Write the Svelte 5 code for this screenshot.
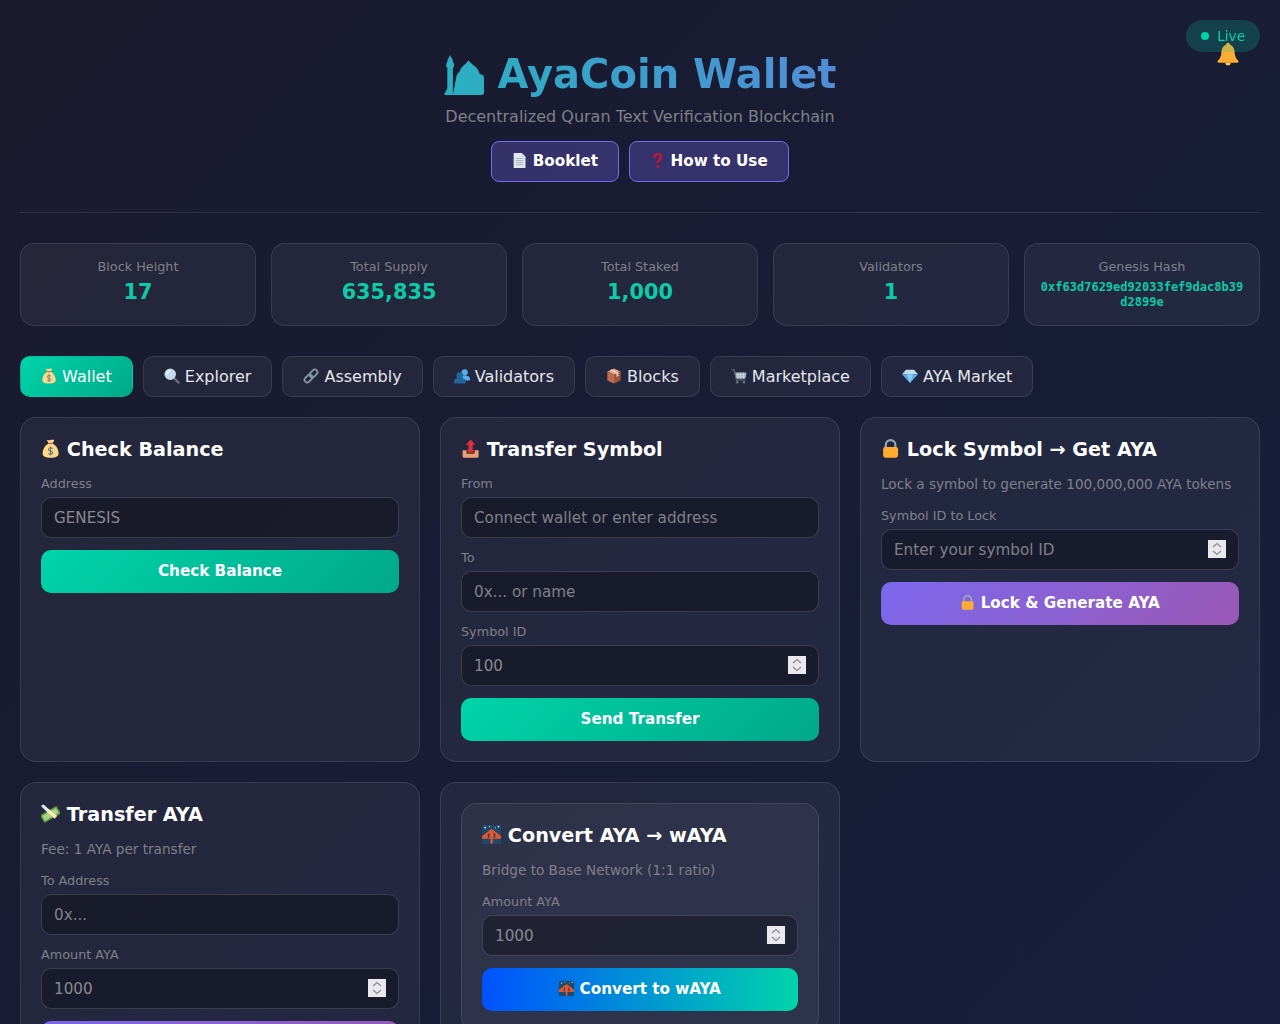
<script>
    const stats = [
        { label: 'Block Height', value: '17' },
        { label: 'Total Supply', value: '635,835' },
        { label: 'Total Staked', value: '1,000' },
        { label: 'Validators', value: '1' }
    ];
    const tabs = [
        { icon: 'bag', label: 'Wallet' },
        { icon: 'search', label: 'Explorer' },
        { icon: 'link', label: 'Assembly' },
        { icon: 'busts', label: 'Validators' },
        { icon: 'box', label: 'Blocks' },
        { icon: 'cart', label: 'Marketplace' },
        { icon: 'gem', label: 'AYA Market' }
    ];
    let active = $state('Wallet');
</script>

{#snippet icon(name)}
    <svg class="ico" viewBox="0 0 36 36" aria-hidden="true">
        {#if name === 'bag'}
            <path fill="#FDD888" d="M18 8C10 8 3 18 3 27c0 6 6 8 15 8s15-2 15-8c0-9-7-19-15-19z" />
            <path fill="#FDD888" d="M11 2c2.5-1 4 1 7 0s4.5-1 7 0l-3 6h-8z" />
            <path fill="#BF6952" d="M13 7h10v2.500H13z" />
            <path fill="none" stroke="#67757F" stroke-width="2" d="M22 18.500c-1-1.500-2.500-2-4-2-2 0-4 1-4 3 0 4.500 8 2.500 8 6.500 0 2-2 3-4 3-1.500 0-3-.5-4-2M18 14v17" />
        {:else if name === 'search'}
            <path stroke="#66757F" stroke-width="5" stroke-linecap="round" d="M23 23l10 10" />
            <circle cx="14" cy="14" r="11" fill="#BBDDF5" stroke="#CCD6DD" stroke-width="4" />
            <path fill="none" stroke="#fff" stroke-width="2.500" d="M7 14a7 7 0 0 1 7-7" />
        {:else if name === 'link'}
            <g fill="none" stroke="#8899A6" stroke-width="4" transform="rotate(-45 18 18)">
                <rect x="0" y="12" width="20" height="12" rx="6" />
                <rect x="16" y="12" width="20" height="12" rx="6" />
            </g>
        {:else if name === 'busts'}
            <circle cx="24" cy="10" r="7" fill="#55ACEE" />
            <path fill="#55ACEE" d="M12 26c0-7 5-9 12-9s12 2 12 8v3H12z" />
            <circle cx="13" cy="17" r="7.500" fill="#269" />
            <path fill="#269" d="M0 35v-5c0-6 6-8 13-8s13 2 13 8v5z" />
        {:else if name === 'box'}
            <path fill="#D99E82" d="M18 1L3 8l15 8 15-8z" />
            <path fill="#C1694F" d="M3 8v20l15 7V16z" />
            <path fill="#A0553A" d="M33 8v20l-15 7V16z" />
            <path fill="#F5D6C4" d="M9 5l15 8v7l4-2v-7L13 3z" />
        {:else if name === 'cart'}
            <path fill="#99AAB5" d="M9 10h26l-3 14H12z" />
            <path fill="none" stroke="#E1E8ED" stroke-width="1.500" d="M10 15h24M11 20h22M16 10v14M22 10v14M28 10v14" />
            <path fill="none" stroke="#66757F" stroke-width="2.500" d="M1 4h6l5 23h20" />
            <circle cx="14" cy="32" r="3" fill="#66757F" />
            <circle cx="29" cy="32" r="3" fill="#66757F" />
        {:else if name === 'gem'}
            <path fill="#BDDDF4" d="M9 4h18l9 10H0z" />
            <path fill="#5DADEC" d="M0 14h36L18 34z" />
            <path fill="#8CCAF7" d="M11 14h14l-7 20z" />
        {:else if name === 'outbox'}
            <path fill="#E9A07A" d="M3 21h30v12a2 2 0 0 1-2 2H5a2 2 0 0 1-2-2z" />
            <path fill="#7C3A26" d="M9 21h18l-2 7H11z" />
            <path fill="#DD2E44" d="M18 1l9 10h-5v13h-8V11H9z" />
        {:else if name === 'lock'}
            <path fill="none" stroke="#99AAB5" stroke-width="4" d="M9 17V11a9 9 0 0 1 18 0v6" />
            <rect x="4" y="15" width="28" height="20" rx="4" fill="#FFAC33" />
        {:else if name === 'wings'}
            <g transform="rotate(-30 18 20)">
                <rect x="0" y="11" width="36" height="17" rx="2" fill="#5C913B" />
                <rect x="3" y="14" width="30" height="11" fill="#A6D388" />
            </g>
            <path fill="none" stroke="#E1E8ED" stroke-width="6" stroke-linecap="round" d="M4 4l11 10" />
            <path fill="none" stroke="#FFE8B6" stroke-width="7" d="M14 13l14 12" />
        {:else if name === 'bridge'}
            <rect width="36" height="36" rx="3" fill="#1D4A6B" />
            <circle cx="6" cy="5" r="1.500" fill="#fff" />
            <circle cx="14" cy="3" r="1" fill="#fff" />
            <circle cx="25" cy="5" r="1" fill="#fff" />
            <circle cx="31" cy="3" r="1.500" fill="#fff" />
            <path fill="#E5562B" d="M18 7l18 14v5H0v-5z" />
            <path fill="#1D4A6B" d="M11 24v-7l3-2v9zM22 24v-9l3 2v7z" />
            <rect x="16" y="24" width="4" height="11" fill="#E5562B" />
        {:else if name === 'page'}
            <path fill="#E1E8ED" d="M6 0h17l9 9v25a2 2 0 0 1-2 2H6a2 2 0 0 1-2-2V2a2 2 0 0 1 2-2z" />
            <path fill="#CCD6DD" d="M23 0l9 9h-9z" />
            <path stroke="#99AAB5" stroke-width="2" d="M9 13h18M9 18h18M9 23h18M9 28h18" />
        {:else if name === 'question'}
            <path fill="none" stroke="#BE1931" stroke-width="6" d="M10 11c0-5 4-8 8-8s8 3 8 7c0 6-8 6-8 14" />
            <circle cx="18" cy="32" r="3.500" fill="#BE1931" />
        {:else if name === 'bell'}
            <path fill="#FFAC33" d="M18 1c-1.500 0-3 1-3 3-5 2-7 7-7 12 0 6-3 10-6 13 0 1 1 2 2 2h28c1 0 2-1 2-2-3-3-6-7-6-13 0-5-2-10-7-12 0-2-1.500-3-3-3z" />
            <path fill="#FFCC4D" d="M14 31a4 4 0 0 0 8 0z" />
        {/if}
    </svg>
{/snippet}

{#snippet spinner()}
    <span class="spinner">
        <svg viewBox="0 0 18 18" width="18" height="18" aria-hidden="true">
            <path fill="none" stroke="#8b8b92" stroke-width="1.300" d="M5 7l4-3.500L13 7M5 11l4 3.500 4-3.500" />
        </svg>
    </span>
{/snippet}

<div class="bell">{@render icon('bell')}</div>
<div class="live"><span class="dot"></span>Live</div>

<div class="page">
    <header>
        <h1>
            <svg class="mosque" viewBox="0 0 36 36" aria-hidden="true">
                <defs>
                    <linearGradient id="mosque-fill">
                        <stop offset="0" stop-color="#2aafc1" />
                        <stop offset="1" stop-color="#2eacc3" />
                    </linearGradient>
                </defs>
                <path fill="url(#mosque-fill)" d="M5.500 0C6 2 8 3 8 6l1 2v3H8v25H1C0 36 0 35 1 34l2-4V11H2V8l1-2c0-3 2-4 2.500-6z" />
                <path fill="url(#mosque-fill)" d="M8 36l3-16c1-4 2-4 3-5 1-4 5-6 8-10 3 4 9 6 10 12l3 1 1 2v14c0 1.500-1 2-2 2z" />
            </svg> AyaCoin Wallet
        </h1>
        <p class="tagline">Decentralized Quran Text Verification Blockchain</p>
        <div class="header-links">
            <button class="link-btn">{@render icon('page')} Booklet</button>
            <button class="link-btn">{@render icon('question')} How to Use</button>
        </div>
    </header>

    <section class="stats">
        {#each stats as s}
            <div class="stat">
                <div class="stat-label">{s.label}</div>
                <div class="stat-value">{s.value}</div>
            </div>
        {/each}
        <div class="stat">
            <div class="stat-label">Genesis Hash</div>
            <div class="hash">0xf63d7629ed92033fef9dac8b39d2899e</div>
        </div>
    </section>

    <nav class="tabs">
        {#each tabs as t}
            <button class="tab" class:active={active === t.label} onclick={() => (active = t.label)}>{@render icon(t.icon)} {t.label}</button>
        {/each}
    </nav>

    <main class="grid">
        <div class="card">
            <h2>{@render icon('bag')} Check Balance</h2>
            <label for="bal">Address</label>
            <input id="bal" type="text" value="GENESIS" />
            <button class="action green">Check Balance</button>
        </div>

        <div class="card">
            <h2>{@render icon('outbox')} Transfer Symbol</h2>
            <label for="from">From</label>
            <input id="from" type="text" placeholder="Connect wallet or enter address" />
            <label for="to">To</label>
            <input id="to" type="text" placeholder="0x... or name" />
            <label for="sym">Symbol ID</label>
            <div class="num">
                <input id="sym" type="number" value="100" />
                {@render spinner()}
            </div>
            <button class="action green">Send Transfer</button>
        </div>

        <div class="card">
            <h2>{@render icon('lock')} Lock Symbol → Get AYA</h2>
            <p class="note">Lock a symbol to generate 100,000,000 AYA tokens</p>
            <label for="lock">Symbol ID to Lock</label>
            <div class="num">
                <input id="lock" type="number" placeholder="Enter your symbol ID" />
                {@render spinner()}
            </div>
            <button class="action purple">{@render icon('lock')} Lock &amp; Generate AYA</button>
        </div>

        <div class="card">
            <h2>{@render icon('wings')} Transfer AYA</h2>
            <p class="note">Fee: 1 AYA per transfer</p>
            <label for="aya-to">To Address</label>
            <input id="aya-to" type="text" placeholder="0x..." />
            <label for="aya-amt">Amount AYA</label>
            <div class="num">
                <input id="aya-amt" type="number" value="1000" />
                {@render spinner()}
            </div>
            <button class="action purple">{@render icon('wings')} Send AYA</button>
        </div>

        <div class="card">
            <div class="card">
                <h2>{@render icon('bridge')} Convert AYA → wAYA</h2>
                <p class="note">Bridge to Base Network (1:1 ratio)</p>
                <label for="conv">Amount AYA</label>
                <div class="num">
                    <input id="conv" type="number" value="1000" />
                    {@render spinner()}
                </div>
                <button class="action bridge">{@render icon('bridge')} Convert to wAYA</button>
            </div>
        </div>
    </main>
</div>

<style>
    :global(body) {
        background: linear-gradient(135deg, #1a1a2e 0%, #171f3c 100%);
        background-attachment: fixed;
        color: #fff;
        font-family: "DejaVu Sans", sans-serif;
        min-height: 100vh;
    }

    .page {
        padding: 20px;
    }

    .ico {
        width: 1em;
        height: 1em;
        vertical-align: -0.125em;
    }

    .live {
        position: fixed;
        top: 20px;
        right: 20px;
        z-index: 2;
        display: flex;
        align-items: center;
        gap: 8px;
        padding: 8px 15px;
        border-radius: 20px;
        background: rgba(0, 212, 170, 0.2);
        color: #00d4aa;
        font-size: 13.6px;
    }

    .dot {
        width: 8px;
        height: 8px;
        border-radius: 50%;
        background: #00d4aa;
    }

    .bell {
        position: fixed;
        top: 42px;
        right: 40px;
        z-index: 1;
        font-size: 24px;
        line-height: 24px;
        height: 24px;
    }

    .bell .ico {
        display: block;
    }

    header {
        text-align: center;
        padding: 31px 0 30px;
        margin-bottom: 30px;
        border-bottom: 1px solid rgba(255, 255, 255, 0.1);
    }

    h1 {
        margin: 0 0 10px;
        font-size: 40px;
        font-weight: 700;
        background: linear-gradient(90deg, #00d4aa, #7b68ee);
        -webkit-background-clip: text;
        background-clip: text;
        color: transparent;
    }

    .mosque {
        width: 40px;
        height: 40px;
        vertical-align: -7px;
    }

    .tagline {
        margin: 0;
        color: #808088;
        font-size: 16px;
    }

    .header-links {
        display: flex;
        justify-content: center;
        gap: 10px;
        margin-top: 15px;
    }

    .link-btn {
        padding: 10px 20px;
        border: 1px solid #7b68ee;
        border-radius: 8px;
        background: rgba(123, 104, 238, 0.3);
        color: #fff;
        font: 700 15.2px/19px "DejaVu Sans", sans-serif;
    }

    .stats {
        display: grid;
        grid-template-columns: repeat(5, 1fr);
        gap: 15px;
        margin-bottom: 30px;
    }

    .stat {
        padding: 15px;
        border: 1px solid rgba(255, 255, 255, 0.1);
        border-radius: 14px;
        background: rgba(255, 255, 255, 0.05);
        text-align: center;
    }

    .stat-label {
        margin-bottom: 6px;
        color: #808088;
        font-size: 12.8px;
        line-height: 15px;
    }

    .stat-value {
        color: #0ccba6;
        font-size: 20.8px;
        font-weight: 700;
        line-height: 24px;
    }

    .hash {
        color: #0ccba6;
        font: 700 12px/15px "DejaVu Sans Mono", monospace;
        overflow-wrap: anywhere;
    }

    .tabs {
        display: flex;
        flex-wrap: wrap;
        gap: 10px;
        margin-bottom: 20px;
    }

    .tab {
        padding: 10px 20px;
        border: 1px solid rgba(255, 255, 255, 0.1);
        border-radius: 10px;
        background: rgba(255, 255, 255, 0.05);
        color: #e6e6ec;
        font: 16px/19px "DejaVu Sans", sans-serif;
    }

    .tab.active {
        border-color: transparent;
        background: linear-gradient(135deg, #00d4aa, #00a88a);
        color: #fff;
    }

    .grid {
        display: grid;
        grid-template-columns: repeat(3, 1fr);
        gap: 20px;
    }

    .card {
        padding: 20px;
        border: 1px solid rgba(255, 255, 255, 0.1);
        border-radius: 16px;
        background: rgba(255, 255, 255, 0.05);
    }

    h2 {
        margin: 0 0 15px;
        font-size: 19.2px;
        line-height: 23px;
        font-weight: 700;
    }

    .note {
        margin: 0 0 16px;
        color: #808088;
        font-size: 13.6px;
        line-height: 16px;
    }

    label {
        display: block;
        margin-bottom: 6px;
        color: #808088;
        font-size: 12.8px;
        line-height: 15px;
    }

    input {
        display: block;
        box-sizing: border-box;
        width: 100%;
        height: 41px;
        margin-bottom: 12px;
        padding: 0 12px;
        border: 1px solid rgba(255, 255, 255, 0.15);
        border-radius: 10px;
        background: rgba(0, 0, 0, 0.3);
        color: #8a8a90;
        font: 15.2px "DejaVu Sans", sans-serif;
        appearance: textfield;
    }

    input::placeholder {
        color: #808088;
    }

    input[type='number']::-webkit-inner-spin-button {
        appearance: none;
    }

    .num {
        position: relative;
    }

    .spinner {
        position: absolute;
        top: 11px;
        right: 13px;
        width: 18px;
        height: 18px;
        background: #e9e9ed;
    }

    .spinner svg {
        display: block;
    }

    .action {
        display: block;
        width: 100%;
        padding: 12px;
        border: none;
        border-radius: 10px;
        color: #fff;
        font: 700 15.2px/19px "DejaVu Sans", sans-serif;
    }

    .green {
        background: linear-gradient(135deg, #00d4aa, #00a88a);
    }

    .purple {
        background: linear-gradient(135deg, #7b68ee, #9b59b6);
    }

    .bridge {
        background: linear-gradient(90deg, #0052ff, #00d4aa);
    }
</style>
